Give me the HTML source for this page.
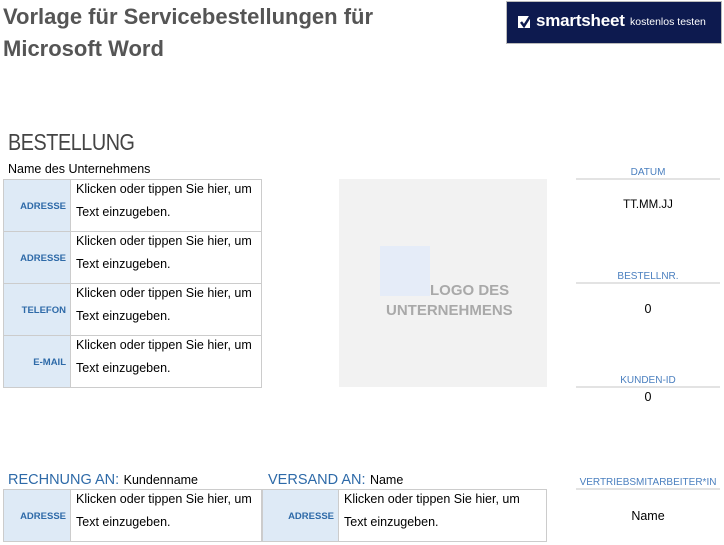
<!DOCTYPE html>
<html><head><meta charset="utf-8"><style>
*{margin:0;padding:0;box-sizing:border-box}
body{width:724px;height:545px;background:#fff;position:relative;overflow:hidden;font-family:"Liberation Sans",Arial,sans-serif;color:#000}
.a{position:absolute;white-space:nowrap}
.t{font-size:22px;font-weight:bold;color:#555}
.lab{position:absolute;background:#deeaf6;border:1px solid #ccc;color:#2e6aa8;font-family:"Liberation Sans",sans-serif;font-weight:bold;font-size:9.5px;text-align:right;padding-right:4px}
.cell{position:absolute;border:1px solid #ccc;font-size:12.5px;line-height:23px;padding-left:5px;padding-top:0}
.cell span{position:relative;top:-2px;display:block}
.rl{position:absolute;left:576px;width:144px;border-bottom:2px solid #e3e3e3;color:#4a7fbf;font-size:10px;text-align:center;font-family:"Liberation Sans",sans-serif}
.rv{position:absolute;left:576px;width:144px;text-align:center;font-size:12.5px}
.h{color:#2e6aa8;font-size:14.5px}
</style></head><body>
<div class="a t" style="left:3px;top:4px">Vorlage für Servicebestellungen für</div>
<div class="a t" style="left:3px;top:36px">Microsoft Word</div>
<div class="a" style="left:506px;top:1px;width:216px;height:43px;background:#0d1a4f;border:1px solid #bbb"></div>
<svg class="a" style="left:518px;top:14px" width="15" height="15" viewBox="0 0 15 15"><rect x="0" y="2" width="12" height="12" fill="#fff"/><path d="M3 8 L6 12 L13 1" stroke="#0d1a4f" stroke-width="2.5" fill="none"/></svg>
<div class="a" style="left:536px;top:11px;color:#fff;font-size:17px;font-weight:bold;letter-spacing:-0.2px">smartsheet</div>
<div class="a" style="left:630px;top:16px;color:#fff;font-size:10.5px">kostenlos testen</div>
<div class="a" style="left:8px;top:129px;font-size:23px;color:#444;letter-spacing:-0.5px;transform:scaleX(0.86);transform-origin:left top">BESTELLUNG</div>
<div class="a" style="left:8px;top:162px;font-size:12.5px">Name des Unternehmens</div>

<div class="lab" style="left:3px;top:179px;width:68px;height:53px;line-height:53px">ADRESSE</div>
<div class="cell" style="left:70px;top:179px;width:192px;height:53px"><span>Klicken oder tippen Sie hier, um<br>Text einzugeben.</span></div>
<div class="lab" style="left:3px;top:231px;width:68px;height:53px;line-height:53px">ADRESSE</div>
<div class="cell" style="left:70px;top:231px;width:192px;height:53px"><span>Klicken oder tippen Sie hier, um<br>Text einzugeben.</span></div>
<div class="lab" style="left:3px;top:283px;width:68px;height:53px;line-height:53px">TELEFON</div>
<div class="cell" style="left:70px;top:283px;width:192px;height:53px"><span>Klicken oder tippen Sie hier, um<br>Text einzugeben.</span></div>
<div class="lab" style="left:3px;top:335px;width:68px;height:53px;line-height:53px">E-MAIL</div>
<div class="cell" style="left:70px;top:335px;width:192px;height:53px"><span>Klicken oder tippen Sie hier, um<br>Text einzugeben.</span></div>

<div class="a" style="left:339px;top:179px;width:208px;height:208px;background:#f2f2f2"></div>
<div class="a" style="left:380px;top:246px;width:50px;height:50px;background:#e5ecf8"></div>
<div class="a" style="left:430px;top:282px;font-size:15px;font-weight:bold;color:#a9a9a9">LOGO DES</div>
<div class="a" style="left:386px;top:302px;font-size:15px;font-weight:bold;color:#a9a9a9">UNTERNEHMENS</div>

<div class="rl" style="top:167px;height:13px">DATUM</div>
<div class="rv" style="top:199px;font-size:11.5px">TT.MM.JJ</div>
<div class="rl" style="top:271px;height:13px">BESTELLNR.</div>
<div class="rv" style="top:302px">0</div>
<div class="rl" style="top:375px;height:13px">KUNDEN-ID</div>
<div class="rv" style="top:390px">0</div>
<div class="rl" style="top:477px;height:13px">VERTRIEBSMITARBEITER*IN</div>
<div class="rv" style="top:509px">Name</div>

<div class="a" style="left:8px;top:471px"><span class="h">RECHNUNG AN:</span> <span style="font-size:12.5px">Kundenname</span></div>
<div class="a" style="left:268px;top:471px"><span class="h">VERSAND AN:</span> <span style="font-size:12.5px">Name</span></div>
<div class="lab" style="left:3px;top:489px;width:68px;height:53px;line-height:53px">ADRESSE</div>
<div class="cell" style="left:70px;top:489px;width:192px;height:53px"><span>Klicken oder tippen Sie hier, um<br>Text einzugeben.</span></div>
<div class="lab" style="left:262px;top:489px;width:77px;height:53px;line-height:53px">ADRESSE</div>
<div class="cell" style="left:338px;top:489px;width:209px;height:53px"><span>Klicken oder tippen Sie hier, um<br>Text einzugeben.</span></div>
</body></html>
